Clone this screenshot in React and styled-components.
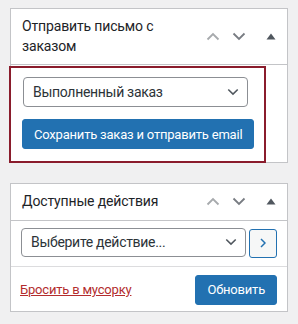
import React from "react";
import styled, { createGlobalStyle } from "styled-components";

const Global = createGlobalStyle`
  html, body {
    margin: 0;
    padding: 0;
    background: #f0f0f1;
    font-family: Roboto, "Noto Sans", sans-serif;
    color: #1d2327;
  }
`;

function ChevronUp({ color }) {
  return (
    <svg width="14" height="9" viewBox="0 0 14 9">
      <path d="M1.5 7.5 L7 2 L12.5 7.5" fill="none" stroke={color} strokeWidth="1.8" />
    </svg>
  );
}

function ChevronDown({ color, w = 14, h = 9 }) {
  return (
    <svg width={w} height={h} viewBox="0 0 14 9">
      <path d="M1.5 1.5 L7 7 L12.5 1.5" fill="none" stroke={color} strokeWidth="1.8" />
    </svg>
  );
}

function Triangle() {
  return (
    <svg width="10" height="7" viewBox="0 0 10 7">
      <path d="M0.5 6.5 L5 0.5 L9.5 6.5 Z" fill="#50575e" />
    </svg>
  );
}

function PanelHeader({ title }) {
  return (
    <Header>
      <Title>{title}</Title>
      <HandleBtn>
        <ChevronUp color="#a7aaad" />
      </HandleBtn>
      <HandleBtn $gap>
        <ChevronDown color="#787c82" />
      </HandleBtn>
      <ToggleBtn>
        <Triangle />
      </ToggleBtn>
    </Header>
  );
}

export default function App() {
  return (
    <>
      <Global />
      <Page>
        <Panel>
          <PanelHeader title="Отправить письмо с заказом" />
          <Highlight>
            <Select $width={225}>
              <span>Выполненный заказ</span>
              <ChevronDown color="#50575e" w={12} h={8} />
            </Select>
            <PrimaryButton $wide>Сохранить заказ и отправить email</PrimaryButton>
          </Highlight>
        </Panel>

        <Panel>
          <PanelHeader title="Доступные действия" />
          <ActionRow>
            <Select $width={225} $small>
              <span>Выберите действие...</span>
              <ChevronDown color="#50575e" w={12} h={8} />
            </Select>
            <GoButton>
              <svg width="6" height="10" viewBox="0 0 6 10">
                <path d="M1 1 L5 5 L1 9" fill="none" stroke="#2271b1" strokeWidth="1.5" />
              </svg>
            </GoButton>
          </ActionRow>
          <Footer>
            <TrashLink href="#">Бросить в мусорку</TrashLink>
            <PrimaryButton>Обновить</PrimaryButton>
          </Footer>
        </Panel>
      </Page>
    </>
  );
}

const Page = styled.div`
  padding: 8px 10px 0 10px;
  width: 278px;
`;

const Panel = styled.div`
  background: #fff;
  border: 1px solid #c3c4c7;
  margin-bottom: 20px;
`;

const Header = styled.div`
  display: flex;
  align-items: center;
  border-bottom: 1px solid #c3c4c7;
`;

const Title = styled.h2`
  flex: 1;
  margin: 0;
  padding: 8px 12px 8px 11px;
  font-size: 14px;
  font-weight: 400;
  line-height: 19.5px;
  letter-spacing: -0.15px;
  color: #1d2327;
`;

const HandleBtn = styled.div`
  width: 26px;
  margin-right: ${(p) => (p.$gap ? "3px" : "0")};
  display: flex;
  justify-content: center;
  align-items: center;
  flex-shrink: 0;
`;

const ToggleBtn = styled.div`
  width: 32px;
  display: flex;
  justify-content: center;
  align-items: center;
  flex-shrink: 0;
`;

const Highlight = styled.div`
  border: 2px solid #8a1c2c;
  margin: 1px 21px -1px -2px;
  padding: 9px 12px 12px 11px;
  display: flex;
  flex-direction: column;
  align-items: flex-start;
  gap: 12px;
`;

const Select = styled.div`
  box-sizing: border-box;
  width: ${(p) => p.$width}px;
  height: ${(p) => (p.$small ? 29 : 30)}px;
  margin-left: ${(p) => (p.$small ? 0 : 1)}px;
  border: 1px solid #8c8f94;
  border-radius: 4px;
  background: #fff;
  display: flex;
  align-items: center;
  justify-content: space-between;
  padding: 0 8px 0 9px;
  font-size: 14px;
  letter-spacing: -0.3px;
  color: #2c3338;
`;

const PrimaryButton = styled.button`
  box-sizing: border-box;
  height: 30px;
  padding: 0 ${(p) => (p.$wide ? 11 : 11)}px;
  border: 1px solid #2271b1;
  border-radius: 3px;
  background: #2271b1;
  color: #fff;
  font-family: Roboto, "Noto Sans", sans-serif;
  font-size: 13px;
  letter-spacing: -0.2px;
  white-space: nowrap;
`;

const ActionRow = styled.div`
  display: flex;
  align-items: flex-start;
  gap: 3px;
  padding: 7px 10px 8px 10px;
  border-bottom: 1px solid #dcdcde;
`;

const GoButton = styled.div`
  box-sizing: border-box;
  width: 28px;
  height: 29px;
  margin-top: 1px;
  border: 1px solid #2271b1;
  border-radius: 3px;
  background: #f6f7f7;
  display: flex;
  align-items: center;
  justify-content: center;
`;

const Footer = styled.div`
  display: flex;
  justify-content: space-between;
  align-items: center;
  padding: 8px 10px 6px 9px;
`;

const TrashLink = styled.a`
  font-size: 13px;
  letter-spacing: -0.2px;
  color: #b32d2e;
  text-decoration: underline;
`;
